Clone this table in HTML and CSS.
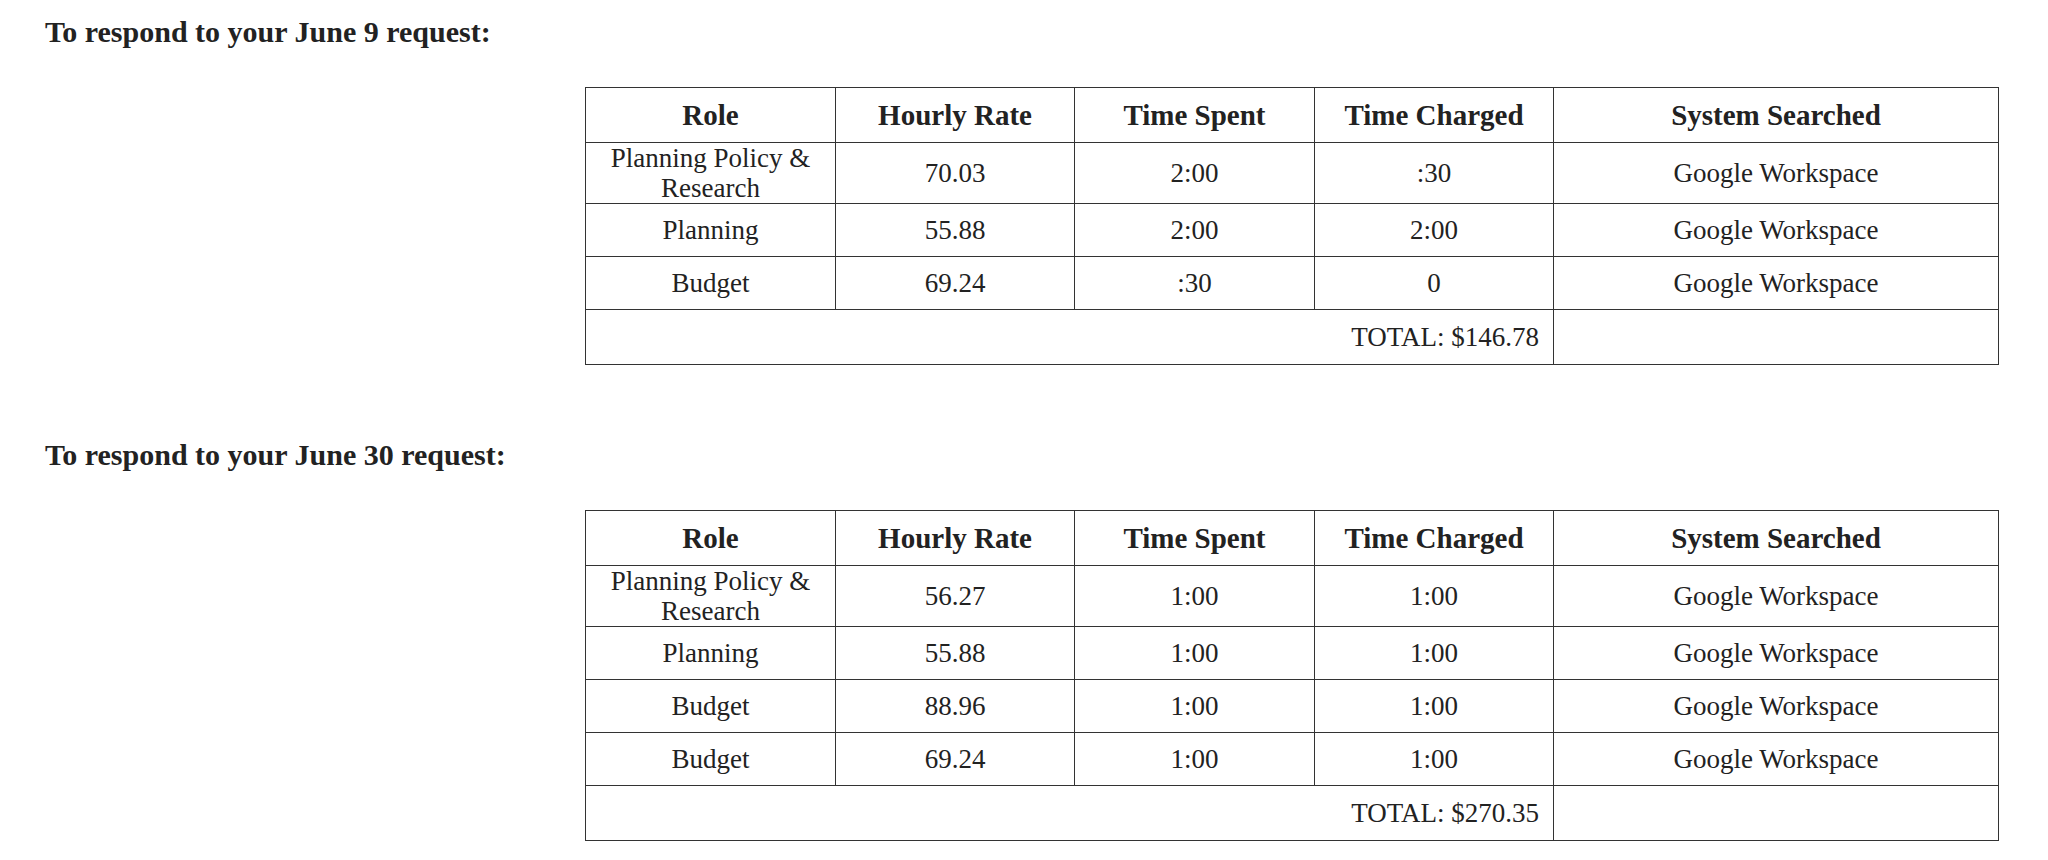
FILE: index.html
```html
<!DOCTYPE html>
<html lang="en">
  <head>
    <meta charset="UTF-8" />
    <meta name="viewport" content="width=device-width, initial-scale=1.0" />
    <title>Request Costs</title>
    <link rel="stylesheet" href="styles.css">
  </head>
  <body>
    <div class="doc">
      <section class="request">
        <h2>To respond to your June 9 request:</h2>
        <table class="cost">
          <colgroup>
            <col class="c-role" />
            <col class="c-rate" />
            <col class="c-spent" />
            <col class="c-charged" />
            <col class="c-system" />
          </colgroup>
          <thead>
            <tr>
              <th>Role</th>
              <th>Hourly Rate</th>
              <th>Time Spent</th>
              <th>Time Charged</th>
              <th>System Searched</th>
            </tr>
          </thead>
          <tbody>
            <tr class="tall">
              <td>Planning Policy &amp; Research</td>
              <td>70.03</td>
              <td>2:00</td>
              <td>:30</td>
              <td>Google Workspace</td>
            </tr>
            <tr>
              <td>Planning</td>
              <td>55.88</td>
              <td>2:00</td>
              <td>2:00</td>
              <td>Google Workspace</td>
            </tr>
            <tr>
              <td>Budget</td>
              <td>69.24</td>
              <td>:30</td>
              <td>0</td>
              <td>Google Workspace</td>
            </tr>
            <tr class="total">
              <td colspan="4">TOTAL: $146.78</td>
              <td></td>
            </tr>
          </tbody>
        </table>
      </section>

      <section class="request">
        <h2>To respond to your June 30 request:</h2>
        <table class="cost">
          <colgroup>
            <col class="c-role" />
            <col class="c-rate" />
            <col class="c-spent" />
            <col class="c-charged" />
            <col class="c-system" />
          </colgroup>
          <thead>
            <tr>
              <th>Role</th>
              <th>Hourly Rate</th>
              <th>Time Spent</th>
              <th>Time Charged</th>
              <th>System Searched</th>
            </tr>
          </thead>
          <tbody>
            <tr class="tall">
              <td>Planning Policy &amp; Research</td>
              <td>56.27</td>
              <td>1:00</td>
              <td>1:00</td>
              <td>Google Workspace</td>
            </tr>
            <tr>
              <td>Planning</td>
              <td>55.88</td>
              <td>1:00</td>
              <td>1:00</td>
              <td>Google Workspace</td>
            </tr>
            <tr>
              <td>Budget</td>
              <td>88.96</td>
              <td>1:00</td>
              <td>1:00</td>
              <td>Google Workspace</td>
            </tr>
            <tr>
              <td>Budget</td>
              <td>69.24</td>
              <td>1:00</td>
              <td>1:00</td>
              <td>Google Workspace</td>
            </tr>
            <tr class="total">
              <td colspan="4">TOTAL: $270.35</td>
              <td></td>
            </tr>
          </tbody>
        </table>
      </section>
    </div>
  </body>
</html>
```

FILE: styles.css
```css
* {
  margin: 0;
  padding: 0;
}
body {
  background: #fff;
  color: #222;
  font-family: "Liberation Serif", "Times New Roman", serif;
}
.doc {
  padding: 15px 49px 0 45px;
}
.request h2 {
  font-size: 30px;
  line-height: 34px;
  font-weight: bold;
  margin-bottom: 38px;
}
.request + .request {
  margin-top: 73px;
}
.cost {
  width: 1414px;
  margin-left: auto;
  border-collapse: collapse;
  table-layout: fixed;
  font-size: 27px;
  line-height: 30px;
}
.cost .c-role {
  width: 250px;
}
.cost .c-rate {
  width: 239px;
}
.cost .c-spent {
  width: 240px;
}
.cost .c-charged {
  width: 239px;
}
.cost th,
.cost td {
  border: 1px solid #333;
  padding: 0 8px;
  text-align: center;
  vertical-align: middle;
}
.cost th {
  font-size: 29px;
  font-weight: bold;
}
.cost thead tr {
  height: 55px;
}
.cost tbody tr {
  height: 53px;
}
.cost tbody tr.tall {
  height: 60px;
}
.cost tbody tr.total {
  height: 55px;
}
.cost tr.total td:first-child {
  text-align: right;
  padding-right: 14px;
}
```
